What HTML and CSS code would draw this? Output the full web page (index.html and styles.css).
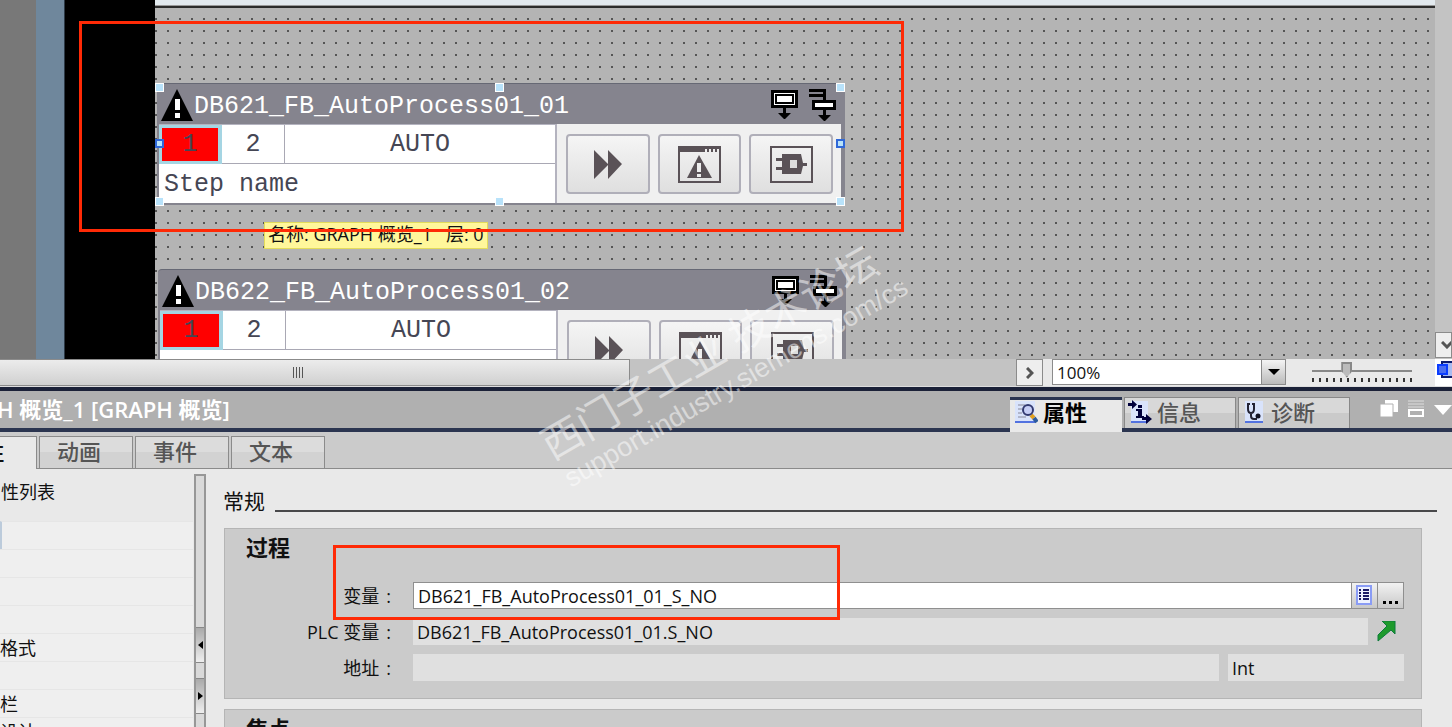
FILE: index.html
```
<!DOCTYPE html>
<html lang="zh-CN">
  <head>
    <meta charset="utf-8">
    <title>GRAPH 概览_1</title>
    <link rel="stylesheet" href="styles.css">
  </head>
  <body>
    <svg hidden>
      <symbol id="i-warn" viewBox="0 0 32 32">
        <path d="M16 0L32 32H0z" fill="#000"/>
        <path d="M14 10h5v11h-5zM14 24h5v5h-5z" fill="#fff"/>
      </symbol>
      <symbol id="i-step" viewBox="0 0 27 29">
        <path d="M0 0h27v18H0z" fill="#000"/>
        <path d="M3 3h21v12H3z" fill="#fff"/>
        <path d="M4 4h19v10H4z" fill="#000"/>
        <path d="M6 6h15v6H6z" fill="#fff"/>
        <path d="M12 18h3v5h5l-6 6h-1l-6-6h5z" fill="#000"/>
      </symbol>
      <symbol id="i-jump" viewBox="0 0 27 32">
        <path d="M0 0h17v12h-3V8H0V5h14V3H0z" fill="#000"/>
        <path d="M3 11h24v10H3z" fill="#000"/>
        <path d="M6 14h18v4H6z" fill="#fff"/>
        <path d="M14 21h3v5h5l-6 6h-1l-6-6h5z" fill="#000"/>
      </symbol>
      <symbol id="i-next" viewBox="0 0 28 29">
        <path d="M0 0l14 14V0l14 14-14 15V15L0 29z" fill="#5a5257"/>
      </symbol>
      <symbol id="i-alarm" viewBox="0 0 43 37">
        <path d="M1 1h41v35H1z" fill="none" stroke="#5a5257" stroke-width="2"/>
        <path d="M0 0h43v3H0zM0 3h27v3H0zM29 3h2v3h-2zM33 3h2v3h-2zM37 3h2v3h-2z" fill="#5a5257"/>
        <path d="M21 9l13 23H9z" fill="#5a5257"/>
        <path d="M19 17h4v9h-4zM19 28h4v3h-4z" fill="#eee"/>
      </symbol>
      <symbol id="i-plug" viewBox="0 0 43 37">
        <path d="M1 1h41v35H1z" fill="none" stroke="#5a5257" stroke-width="2"/>
        <path d="M12 8h19l2 9h4v3h-4l-2 8H12v-4H6v-3h6v-6H6v-3h6z" fill="#5a5257"/>
        <path d="M20 14h7v8h-7z" fill="#ddd"/>
      </symbol>
    </svg>

    <main class="editor">
      <div class="gutter"></div>
      <div class="frame"></div>
      <div class="device"></div>
      <div class="screen">
        <section class="graph first">
          <header>
            <svg class="warn"><use href="#i-warn"/></svg>
            <h2>DB621_FB_AutoProcess01_01</h2>
            <svg class="step"><use href="#i-step"/></svg>
            <svg class="jump"><use href="#i-jump"/></svg>
          </header>
          <div class="graph-body">
            <div class="cells">
              <span class="cell active">1</span>
              <span class="cell">2</span>
              <span class="cell">AUTO</span>
              <span class="cell name">Step name</span>
            </div>
            <div class="actions">
              <button type="button" aria-label="Next"><svg width="28" height="29"><use href="#i-next"/></svg></button>
              <button type="button" aria-label="Alarm"><svg width="43" height="37"><use href="#i-alarm"/></svg></button>
              <button type="button" aria-label="PLC code"><svg width="43" height="37"><use href="#i-plug"/></svg></button>
            </div>
          </div>
          <i class="handle t l"></i><i class="handle t c"></i><i class="handle t r"></i>
          <i class="handle m l"></i><i class="handle m r"></i>
          <i class="handle b l"></i><i class="handle b c"></i><i class="handle b r"></i>
        </section>

        <section class="graph second">
          <header>
            <svg class="warn"><use href="#i-warn"/></svg>
            <h2>DB622_FB_AutoProcess01_02</h2>
            <svg class="step"><use href="#i-step"/></svg>
            <svg class="jump"><use href="#i-jump"/></svg>
          </header>
          <div class="graph-body">
            <div class="cells">
              <span class="cell active">1</span>
              <span class="cell">2</span>
              <span class="cell">AUTO</span>
              <span class="cell name"></span>
            </div>
            <div class="actions">
              <button type="button" aria-label="Next"><svg width="28" height="29"><use href="#i-next"/></svg></button>
              <button type="button" aria-label="Alarm"><svg width="43" height="37"><use href="#i-alarm"/></svg></button>
              <button type="button" aria-label="PLC code"><svg width="43" height="37"><use href="#i-plug"/></svg></button>
            </div>
          </div>
        </section>

        <div class="tip">名称: GRAPH 概览_1 &nbsp; 层: 0</div>
      </div>
      <div class="vscroll">
        <button type="button" aria-label="Scroll down"><svg width="12" height="8"><path d="M1 1l5 5 5-5" fill="none" stroke="#555" stroke-width="3"/></svg></button>
      </div>
    </main>

    <div class="statusbar">
      <div class="hscroll"><div class="thumb"><i></i><i></i><i></i><i></i></div></div>
      <button type="button" class="right" aria-label="Scroll right"><svg width="8" height="12"><path d="M1 1l5 5-5 5" fill="none" stroke="#555" stroke-width="3"/></svg></button>
      <div class="zoom">
        <input type="text" value="100%" aria-label="Zoom">
        <button type="button" aria-label="Zoom levels"><svg width="12" height="6"><path d="M0 0h12L6 6z"/></svg></button>
      </div>
      <div class="slider">
        <input type="range" min="0" max="100" value="33" aria-label="Zoom slider">
        <div class="ticks"></div>
      </div>
      <div class="overview">
        <svg width="15" height="22"><path d="M5 2h14v15H5z" fill="#a9bbf0" stroke="#0c1a6b" stroke-width="2"/><path d="M1 5h9v9H1z" fill="#4a6cf0" stroke="#0a3cff" stroke-width="2"/></svg>
      </div>
    </div>

    <section class="inspector">
      <div class="titlebar">
        <h1>GRAPH 概览_1 [GRAPH 概览]</h1>
        <nav class="views">
          <button type="button" class="on">
            <svg width="24" height="24"><path d="M1 1h20v22H1z" fill="#d9e3fb"/><path d="M1 22h20" stroke="#5272e0" stroke-width="2"/><path d="M4 5h7M4 9h4M4 13h4M4 17h8" stroke="#889" stroke-width="1"/><path d="M17 15l3 3" stroke="#e0a020" stroke-width="4"/><path d="M20 18l3 4" stroke="#2c5a9c" stroke-width="4"/><circle cx="14" cy="10" r="5" fill="#c5cdf5" stroke="#333a70" stroke-width="2"/></svg>
            属性
          </button>
          <button type="button">
            <svg width="24" height="24"><path d="M3 1h17v22H3z" fill="#d9e3fb"/><path d="M3 22h17" stroke="#5272e0" stroke-width="2"/><path d="M10 5h4v3h-4zM8 9h6v7h2v2H8v-2h2v-5H8z" fill="#00003c"/><path d="M0 3h4V0l5 4.500-5 4.500V6H0zM14 17h4v-3l6 5-6 5v-4h-4z" fill="#00003c"/></svg>
            信息
          </button>
          <button type="button">
            <svg width="24" height="24"><path d="M3 1h18v22H3z" fill="#d9e3fb"/><path d="M3 22h18" stroke="#5272e0" stroke-width="2"/><path d="M8 4H6v5q0 4 3 4t3-4V4h-2M9 13v3q0 3 3 3h3" fill="none" stroke="#223" stroke-width="2"/><circle cx="16" cy="16" r="2.500" fill="#112"/></svg>
            诊断
          </button>
        </nav>
        <div class="wintools">
          <svg width="18" height="18"><path d="M5 0h13v12H5z" fill="#fff"/><path d="M0 4h13v13H0z" fill="#fff" stroke="#b0b0b0"/></svg>
          <svg width="18" height="18"><path d="M1 1h16M1 4h16M1 7h16" stroke="#ddd"/><path d="M2 10h14v6H2z" fill="none" stroke="#fff" stroke-width="2"/></svg>
          <svg width="18" height="18"><path d="M0 5h18l-9 10z" fill="#fff"/></svg>
        </div>
      </div>

      <nav class="tabs">
        <button type="button" class="on">属性</button>
        <button type="button">动画</button>
        <button type="button">事件</button>
        <button type="button">文本</button>
      </nav>

      <div class="pane">
        <aside class="list">
          <h3>属性列表</h3>
          <ul>
            <li class="sel"></li>
            <li></li>
            <li></li>
            <li></li>
            <li>格式</li>
            <li></li>
            <li>栏</li>
            <li>设计</li>
          </ul>
        </aside>
        <div class="splitter">
          <button type="button" aria-label="Collapse"><svg width="5" height="8"><path d="M5 0v8L0 4z"/></svg></button>
          <button type="button" aria-label="Expand"><svg width="5" height="8"><path d="M0 0v8l5-4z"/></svg></button>
        </div>
        <div class="content">
          <h3 class="rule">常规</h3>
          <fieldset class="group process">
            <h4>过程</h4>
            <div class="row">
              <label for="tag">变量<b>:</b></label>
              <div class="tagbox">
                <input id="tag" type="text" value="DB621_FB_AutoProcess01_01_S_NO">
                <button type="button" aria-label="List"><svg width="17" height="21"><path d="M1 1h14v18H1z" fill="#eef2ff" stroke="#8a9cf5" stroke-width="2"/><path d="M3 5h2M3 8h2M3 11h2M3 14h2M7 5h6M7 8h6M7 11h6M7 14h6" stroke="#1a1a66" stroke-width="2"/></svg></button>
                <button type="button" aria-label="Browse"><svg width="16" height="18"><path d="M0 14h3v3H0zM6 14h3v3H6zM12 14h3v3h-3z"/></svg></button>
              </div>
            </div>
            <div class="row">
              <label for="plc">PLC 变量<b>:</b></label>
              <input id="plc" type="text" readonly value="DB621_FB_AutoProcess01_01.S_NO">
              <a href="#plc" class="goto" aria-label="Go to tag"><svg width="20" height="21"><path d="M5 0h13v13l-4-4L1 20v-6L10 5z" fill="#1e9a2c" stroke="#0d7a3c" stroke-width="1"/></svg></a>
            </div>
            <div class="row">
              <label for="addr">地址<b>:</b></label>
              <input id="addr" type="text" readonly>
              <input class="type" type="text" readonly value="Int" aria-label="Type">
            </div>
          </fieldset>
          <fieldset class="group">
            <h4>焦点</h4>
          </fieldset>
        </div>
      </div>
    </section>

    <div class="mark mark-block"></div>
    <div class="mark mark-tag"></div>
    <div class="watermark">
      <p>西门子工业 技术论坛</p>
      <p class="url">support.industry.siemens.com/cs</p>
    </div>
  </body>
</html>
```
FILE: styles.css
```
* {
  box-sizing: border-box;
}
html,
body {
  height: 100%;
}
body {
  margin: 0;
  position: relative;
  display: flex;
  flex-direction: column;
  overflow: hidden;
  background: #e9e9e9;
  font-family: "Open Sans", "Noto Sans CJK SC", sans-serif;
  font-size: 18px;
  color: #111;
}
h1, h2, h3, h4, p, ul {
  margin: 0;
  padding: 0;
  font-weight: normal;
}
ul {
  list-style: none;
}
button,
input {
  font: inherit;
  color: inherit;
  margin: 0;
  padding: 0;
  border-radius: 0;
}
button {
  display: flex;
  align-items: center;
  justify-content: center;
  border: 0;
}
svg {
  flex: none;
  display: block;
}
svg[hidden] {
  display: none;
}

/* editor */
.editor {
  flex: none;
  height: 359px;
  display: flex;
}
.gutter {
  width: 36px;
  background: #787878;
}
.frame {
  width: 29px;
  background: #6f879c;
  border-right: 1px solid #2d3a47;
}
.device {
  width: 90px;
  background: #000;
}
/* 12px snap grid */
.screen {
  flex: 1;
  position: relative;
  overflow: hidden;
  border-top: 5px solid #e2e9ee;
  box-shadow: inset 0 1px #999, inset 0 3px #2b2b2b;
  background-color: #b4b4b4;
  background-image: conic-gradient(from 90deg at 10px 10px, #555 90deg, transparent 0);
  background-size: 12px 12px;
  background-position: 2px 3px;
}
.vscroll {
  width: 17px;
  display: flex;
  flex-direction: column;
  justify-content: flex-end;
  background: #c3c3c3;
}
.vscroll button {
  height: 26px;
  margin-bottom: 1px;
  padding-left: 6px;
  overflow: hidden;
  border: 1px solid #8b8b8b;
  background: #eee;
}

/* graph overview blocks */
.graph {
  position: absolute;
  width: 688px;
  height: 122px;
  padding: 1px 4px 4px 2px;
  border-radius: 4px 4px 0 0;
  border-top: 1px solid #666874;
  background: #85848e;
  font-family: "Liberation Mono", monospace;
  font-size: 25px;
  color: #454654;
}
.first {
  left: 2px;
  top: 78px;
}
.second {
  left: 3px;
  top: 264px;
}
.graph header {
  height: 39px;
  display: flex;
  align-items: center;
  padding: 0 5px 0 2px;
}
.graph h2 {
  flex: 1;
  margin-left: 1px;
  padding-top: 5px;
  line-height: 32px;
  font-size: 25px;
  color: #fff;
}
.warn {
  width: 32px;
  height: 32px;
}
.step {
  width: 27px;
  height: 29px;
  margin-right: 11px;
}
.jump {
  width: 27px;
  height: 32px;
}
.graph-body {
  display: flex;
  height: 79px;
  background: #f0f0f0;
}
.cells {
  width: 398px;
  display: grid;
  grid-template-columns: 63px 63px 1fr;
  grid-template-rows: 39px 40px;
  background: #fff;
  border-right: 2px solid #b4b3bf;
  border-top: 1px solid #b4b3bf;
}
.cell {
  display: flex;
  align-items: center;
  justify-content: center;
  border-right: 1px solid #a9a8b4;
  border-bottom: 1px solid #a9a8b4;
}
.cell:nth-child(3),
.cell.name {
  border-right: 0;
}
.cell.active {
  border: 3px solid #a5d5e3;
  border-right-width: 4px;
  background: #f00;
}
.cell.name {
  grid-column: 1 / 4;
  justify-content: flex-start;
  padding-left: 5px;
  border-bottom: 0;
}
.actions {
  flex: 1;
  display: flex;
  gap: 8px;
  padding: 10px 8px 9px 9px;
}
.actions button {
  flex: 1;
  border: 2px solid #b0afb9;
  border-radius: 4px;
  background: linear-gradient(#f5f5f5, #dfdfdf);
}

.handle {
  position: absolute;
  width: 9px;
  height: 9px;
  border: 1px solid #fff;
  background: #b8e2fa;
}
.handle.t { top: -1px; }
.handle.m { top: 55px; border: 2px solid #2f68d8; }
.handle.b { bottom: -1px; }
.handle.l { left: -2px; }
.handle.c { left: 338px; }
.handle.r { right: 0; }

.tip {
  position: absolute;
  left: 109px;
  top: 217px;
  height: 27px;
  padding: 0 3px;
  border: 1px solid #e3dc5a;
  background: #fff79b;
  line-height: 22px;
  white-space: pre;
}

/* zoom bar */
.statusbar {
  flex: none;
  height: 28px;
  display: flex;
  border-bottom: 1px solid #ddd;
  background: #e9e9e9;
}
.hscroll {
  flex: 1;
  background: #c3c3c3;
}
.thumb {
  width: 62%;
  height: 27px;
  display: flex;
  align-items: center;
  justify-content: center;
  gap: 2px;
  padding-right: 33px;
  border: 1px solid #8b8b8b;
  border-left: 0;
  background: linear-gradient(#ececec, #d0d0d0);
}
.thumb i {
  width: 1px;
  height: 11px;
  background: #555;
}
.statusbar .right {
  width: 27px;
  border: 1px solid #8b8b8b;
  background: #eee;
}
.zoom {
  width: 234px;
  height: 26px;
  margin-left: 9px;
  display: flex;
  border: 1px solid #8b8b8b;
}
.zoom input {
  flex: 1;
  min-width: 0;
  border: 0;
  padding-left: 4px;
  font-size: 17px;
}
.zoom button {
  width: 24px;
  border-left: 1px solid #8b8b8b;
  background: linear-gradient(#f4f4f4, #bbb);
}
.slider {
  width: 100px;
  margin: 0 23px 0 26px;
  padding-top: 2px;
}
.slider input {
  display: block;
  width: 100%;
  height: 17px;
  appearance: none;
  background: linear-gradient(#888, #888) 0 9px / 100% 2px no-repeat;
}
.slider input::-webkit-slider-thumb {
  appearance: none;
  width: 11px;
  height: 16px;
  background: #bbb;
  border: 2px solid #888;
  clip-path: polygon(0 0, 100% 0, 100% 60%, 50% 100%, 0 60%);
}
.ticks {
  height: 4px;
  background: repeating-linear-gradient(90deg, #333 0 2px, transparent 2px 7px);
}
.overview {
  width: 17px;
  padding: 1px 0 0 2px;
  background: #fff;
}

/* inspector */
.inspector {
  flex: 1;
  min-height: 0;
  display: flex;
  flex-direction: column;
}
.titlebar {
  flex: none;
  height: 45px;
  display: flex;
  align-items: flex-start;
  border-top: 4px solid #1b2138;
  border-bottom: 4px solid #2b3550;
  background: #b0b0b0;
}
.titlebar h1 {
  flex: 1;
  margin-left: -61px;
  font-size: 22px;
  font-weight: 600;
  line-height: 36px;
  color: #fff;
}
.views {
  display: flex;
  gap: 2px;
  padding-top: 6px;
}
.views button {
  width: 112px;
  height: 31px;
  gap: 5px;
  justify-content: flex-start;
  padding-left: 3px;
  padding-bottom: 3px;
  border: 1px solid #888;
  border-bottom: 0;
  background: linear-gradient(#d8d8d8 50%, #cacaca 50%);
  font-size: 22px;
  font-weight: 500;
  line-height: 28px;
  color: #555;
}
.views .on {
  height: 35px;
  padding-left: 4px;
  padding-bottom: 8px;
  border: 0;
  border-top: 3px solid #2b3550;
  background: #e9e9e9;
  font-weight: bold;
  color: #000;
}
.wintools {
  display: flex;
  gap: 9px;
  margin-left: 30px;
  padding-top: 9px;
}
.tabs {
  flex: none;
  height: 37px;
  display: flex;
  align-items: flex-end;
  gap: 2px;
  border-bottom: 1px solid #8b8b8b;
  background: #cbcbcb;
}
.tabs button {
  width: 94px;
  height: 32px;
  padding: 0 14px 4px 0;
  border: 1px solid #8b8b8b;
  border-bottom: 0;
  background: linear-gradient(#dcdcdc 50%, #d2d2d2 50%);
  font-size: 22px;
  font-weight: 500;
  line-height: 28px;
  color: #555;
}
.tabs .on {
  margin-left: -57px;
  margin-bottom: -1px;
  height: 33px;
  border-left: 0;
  background: #e9e9e9;
  color: #111;
}
.pane {
  flex: 1;
  min-height: 0;
  display: flex;
  overflow: hidden;
}
.list {
  flex: none;
  width: 193px;
}
.list h3 {
  height: 52px;
  margin-left: -17px;
  font-size: 18px;
  line-height: 46px;
}
.list ul {
  background: #efefef;
}
.list li {
  height: 28px;
  border-top: 1px solid #e6e6e6;
  line-height: 28px;
}
.list .sel {
  border-left: 2px solid #bccbdb;
}
.splitter {
  flex: none;
  width: 12px;
  margin: 5px 17px 0 1px;
  border: 2px solid #979797;
  border-bottom: 0;
  background: #d9d9d9;
  padding-top: 151px;
}
.splitter button {
  width: 8px;
  height: 36px;
  margin-bottom: 15px;
  border-top: 1px solid #888;
  border-bottom: 1px solid #888;
  background: linear-gradient(#aaa, #eee);
}
.content {
  flex: 1;
  min-width: 0;
  padding-right: 15px;
}
.rule {
  display: flex;
  height: 59px;
  font-size: 21px;
  line-height: 64px;
}
.rule::after {
  content: "";
  flex: 1;
  height: 2px;
  margin: 41px 0 0 10px;
  background: #48484a;
}
.group {
  min-width: 0;
  margin: 0 15px 10px 1px;
  padding: 0 17px 17px 21px;
  border: 1px solid #b5b5b5;
  background: #cbcbcb;
}
.group h4 {
  height: 53px;
  font-size: 22px;
  font-weight: bold;
  line-height: 36px;
}
.row {
  display: flex;
  align-items: center;
}
.row + .row {
  margin-top: 9px;
}
.row label {
  width: 167px;
  padding-right: 22px;
  display: flex;
  justify-content: flex-end;
  gap: 7px;
  line-height: 26px;
  white-space: nowrap;
}
.row label b {
  font-weight: normal;
}
.row input {
  flex: 1;
  min-width: 0;
  height: 27px;
  padding: 0 4px;
  border: 0;
  background: #e0e0e0;
}
.tagbox {
  flex: 1;
  display: flex;
  height: 27px;
  border: 1px solid #8f8f8f;
}
.tagbox input {
  height: 25px;
  background: #fff;
}
.tagbox button {
  width: 26px;
  border-left: 1px solid #8f8f8f;
  background: linear-gradient(#f2f2f2, #c8c8c8);
}
.goto {
  width: 36px;
  padding-left: 9px;
}
.row .type {
  flex: 0 0 176px;
  margin-left: 9px;
}

/* annotations */
.mark {
  position: absolute;
  border: 3px solid #ff2a06;
}
.mark-block {
  left: 79px;
  top: 21px;
  width: 825px;
  height: 211px;
}
.mark-tag {
  left: 333px;
  top: 545px;
  width: 507px;
  height: 75px;
}
.watermark {
  position: absolute;
  left: 526px;
  top: 326px;
  width: 388px;
  transform: rotate(-30deg);
  color: rgba(255, 255, 255, .5);
  font-family: "Liberation Sans", "Noto Sans CJK SC", sans-serif;
  font-size: 41px;
  font-weight: 500;
  line-height: 48px;
  white-space: nowrap;
  pointer-events: none;
}
.watermark .url {
  padding-left: 3px;
  font-size: 27px;
  line-height: 28px;
}
```
